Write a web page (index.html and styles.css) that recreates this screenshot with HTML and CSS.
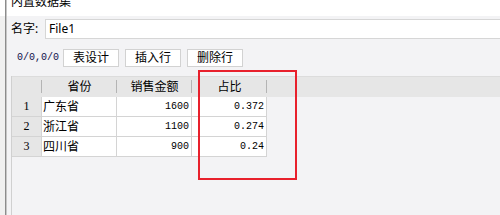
FILE: index.html
```html
<!DOCTYPE html>
<html lang="zh-CN">
<head>
<meta charset="utf-8">
<title>内置数据集</title>
<link rel="stylesheet" href="styles.css">
</head>
<body>
<div class="window">
  <div class="frame-left"></div>
  <div class="main">
    <div class="title"><div class="title-text">内置数据集</div></div>
    <div class="name-row">
      <span class="label">名字:</span>
      <div class="input">File1</div>
    </div>
    <div class="toolbar">
      <span class="pos">0/0,0/0</span>
      <button class="btn">表设计</button>
      <button class="btn">插入行</button>
      <button class="btn">删除行</button>
    </div>
    <div class="grid">
      <div class="ghead">
        <div class="hc rowhead"></div>
        <div class="hc col">省份</div>
        <div class="hc col">销售金额</div>
        <div class="hc col">占比</div>
      </div>
      <div class="grow">
        <div class="c rn">1</div>
        <div class="c col txt">广东省</div>
        <div class="c col num">1600</div>
        <div class="c col num">0.372</div>
      </div>
      <div class="grow">
        <div class="c rn">2</div>
        <div class="c col txt">浙江省</div>
        <div class="c col num">1100</div>
        <div class="c col num">0.274</div>
      </div>
      <div class="grow">
        <div class="c rn">3</div>
        <div class="c col txt">四川省</div>
        <div class="c col num">900</div>
        <div class="c col num">0.24</div>
      </div>
    </div>
  </div>
</div>
<div class="highlight"></div>
</body>
</html>
```
FILE: styles.css
```css
* { box-sizing: border-box; }
html, body { margin: 0; padding: 0; }
body {
  width: 500px;
  height: 215px;
  overflow: hidden;
  position: relative;
  background: #f3f3f5;
  font-family: "Noto Sans", "Noto Sans CJK SC", sans-serif;
  font-size: 12px;
  color: #000;
}
.window {
  display: flex;
  height: 215px;
}
.frame-left {
  width: 7px;
  flex: none;
  background:
    linear-gradient(to right, #ffffff 0 5px, transparent 5px) no-repeat top left / 7px 16px,
    linear-gradient(to right, #f0f0f0 0 5px, #8c8c8c 5px 6px, #c6c6c6 6px 7px);
}
.main {
  flex: 1;
  display: flex;
  flex-direction: column;
  min-width: 0;
}
.title {
  height: 16px;
  background: #fff;
  overflow: hidden;
  padding-left: 4px;
}
.title-text {
  margin-top: -4px;
  line-height: 12px;
  font-size: 12px;
}
.name-row {
  display: flex;
  align-items: stretch;
  height: 23px;
  padding-top: 3px;
  background: #f3f3f5;
}
.label {
  width: 38px;
  padding-left: 4px;
  line-height: 20px;
  flex: none;
}
.input {
  flex: 1;
  height: 20px;
  background: #fff;
  border: 1px solid #d6d6d6;
  border-right: none;
  padding-left: 3px;
  line-height: 18px;
}
.toolbar {
  display: flex;
  align-items: flex-start;
  height: 37px;
  padding-top: 10px;
  padding-left: 10px;
}
.pos {
  width: 46px;
  flex: none;
  font-family: "Liberation Mono", monospace;
  font-size: 10px;
  line-height: 18px;
  color: #10104a;
}
.btn {
  width: 56px;
  height: 18px;
  margin: 0 6px 0 0;
  padding: 0;
  background: #fff;
  border: 1px solid #d2d2d2;
  border-radius: 0;
  font-family: "Noto Sans", "Noto Sans CJK SC", sans-serif;
  font-size: 12px;
  line-height: 16px;
  color: #000;
}
.grid {
  flex: 1;
  margin-left: 4px;
  border-left: 1px solid #d0d0d0;
}
.ghead {
  display: flex;
  height: 21px;
  background: #e6e6e6;
  border-top: 1px solid #dcdcdc;
}
.hc {
  height: 20px;
  line-height: 19px;
  text-align: center;
  background: linear-gradient(#b4b4b4, #b4b4b4) no-repeat right 3px / 1px 13px;
}
.rowhead { width: 30px; }
.col { width: 75px; }
.grow {
  display: flex;
  height: 20px;
}
.c {
  height: 20px;
  border-right: 1px solid #d4d4d4;
  border-bottom: 1px solid #d4d4d4;
  background: #fff;
  line-height: 19px;
  white-space: nowrap;
}
.rn {
  width: 30px;
  background: #e6e6e6;
  text-align: center;
  font-family: "Liberation Serif", serif;
  font-size: 12px;
}
.txt {
  padding-left: 1px;
}
.num {
  text-align: right;
  padding-right: 2px;
  font-family: "Liberation Mono", monospace;
  font-size: 10px;
}
.highlight {
  position: absolute;
  left: 198px;
  top: 70px;
  width: 99px;
  height: 110px;
  border: 2px solid #e8202c;
}
```
